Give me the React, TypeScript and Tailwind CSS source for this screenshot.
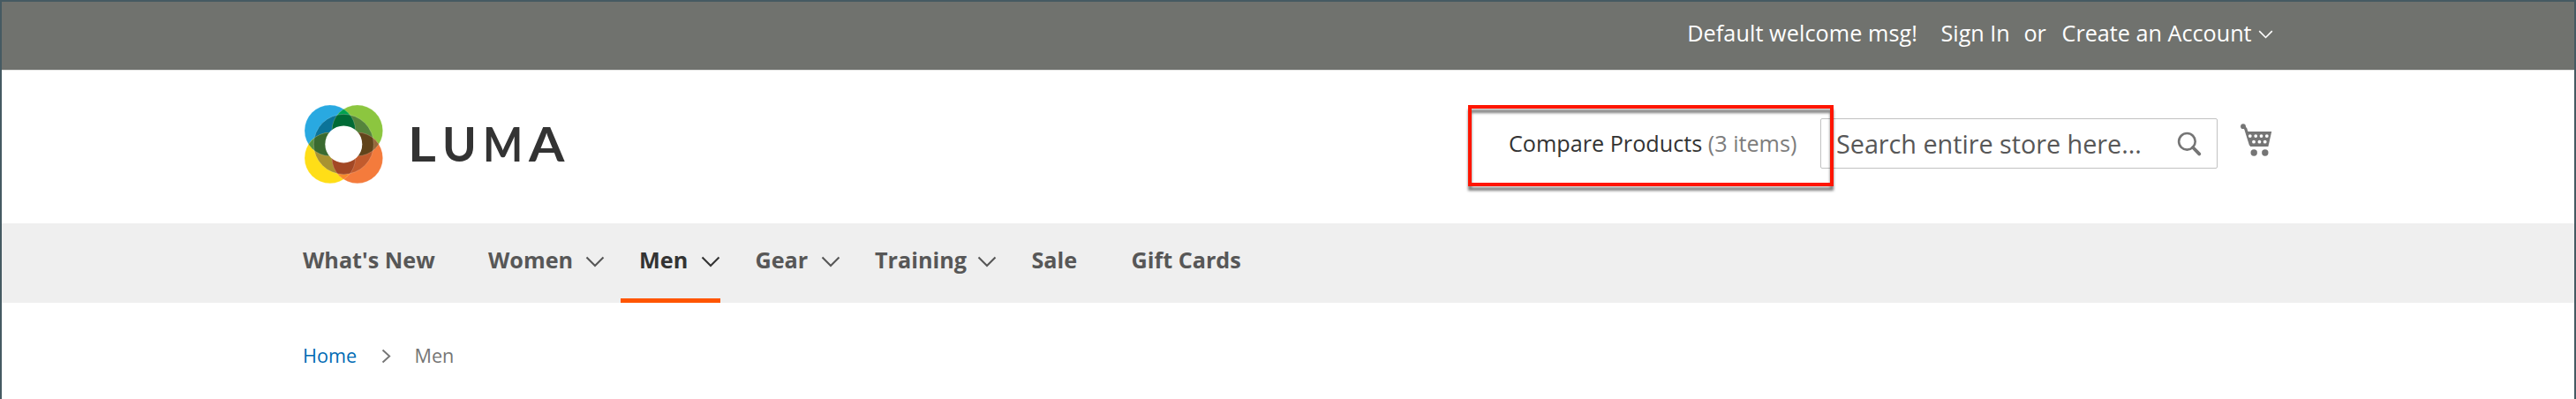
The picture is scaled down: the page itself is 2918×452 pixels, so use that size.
import React from "react";

type NavEntry = { label: string; width: string; menu?: "normal" | "active"; chevron?: string };

const navEntries: NavEntry[] = [
  { label: "What's New", width: "w-[210px]" },
  { label: "Women", width: "w-[150px]", menu: "normal", chevron: "left-[110px]" },
  { label: "Men", width: "w-[113px] mr-[39.5px] pl-[21px]", menu: "active", chevron: "left-[91px]" },
  { label: "Gear", width: "w-[135.5px]", menu: "normal", chevron: "left-[74px]" },
  { label: "Training", width: "w-[177.5px]", menu: "normal", chevron: "left-[116px]" },
  { label: "Sale", width: "w-[113px]" },
  { label: "Gift Cards", width: "w-[140px]" },
];

function Chevron({ className = "" }: { className?: string }) {
  return (
    <svg className={className} viewBox="0 0 22 13" fill="none" stroke="currentColor" strokeWidth="2.1">
      <path d="M1.5 1.5 L11 11 L20.5 1.5" />
    </svg>
  );
}

function LumaLogo() {
  return (
    <svg className="h-[90px] w-[90px] shrink-0" viewBox="344 118 90 90">
      <defs>
        <clipPath id="tl"><circle cx="373.8" cy="147.9" r="28.8" /></clipPath>
        <clipPath id="tr"><circle cx="404.8" cy="147.9" r="28.8" /></clipPath>
        <clipPath id="bl"><circle cx="373.8" cy="178.9" r="28.8" /></clipPath>
        <clipPath id="ring"><circle cx="389.3" cy="163.4" r="34" /></clipPath>
      </defs>
      <circle cx="373.8" cy="147.9" r="28.8" fill="#29a9e1" />
      <circle cx="404.8" cy="147.9" r="28.8" fill="#8cc63f" />
      <circle cx="373.8" cy="178.9" r="28.8" fill="#ffde17" />
      <circle cx="404.8" cy="178.9" r="28.8" fill="#f47b3c" />
      <circle cx="404.8" cy="147.9" r="28.8" fill="#00a14f" clipPath="url(#tl)" />
      <circle cx="373.8" cy="178.9" r="28.8" fill="#579240" clipPath="url(#tl)" />
      <circle cx="404.8" cy="178.9" r="28.8" fill="#96683a" clipPath="url(#tr)" />
      <circle cx="404.8" cy="178.9" r="28.8" fill="#f68a2c" clipPath="url(#bl)" />
      <g clipPath="url(#ring)">
        <circle cx="373.8" cy="147.9" r="28.8" fill="#0b7499" />
        <circle cx="404.8" cy="147.9" r="28.8" fill="#55843c" />
        <circle cx="373.8" cy="178.9" r="28.8" fill="#a99331" />
        <circle cx="404.8" cy="178.9" r="28.8" fill="#c25b2d" />
        <circle cx="404.8" cy="147.9" r="28.8" fill="#006a36" clipPath="url(#tl)" />
        <circle cx="373.8" cy="178.9" r="28.8" fill="#3a6a30" clipPath="url(#tl)" />
        <circle cx="404.8" cy="178.9" r="28.8" fill="#61441b" clipPath="url(#tr)" />
        <circle cx="404.8" cy="178.9" r="28.8" fill="#a34825" clipPath="url(#bl)" />
      </g>
      <g fill="none" stroke="#fff" strokeOpacity="0.3" strokeWidth="0.6">
        <circle cx="373.8" cy="147.9" r="28.8" />
        <circle cx="404.8" cy="147.9" r="28.8" />
        <circle cx="373.8" cy="178.9" r="28.8" />
        <circle cx="404.8" cy="178.9" r="28.8" />
        <circle cx="389.3" cy="163.4" r="34" />
      </g>
      <circle cx="389.3" cy="163.4" r="21" fill="#fff" />
    </svg>
  );
}

function CartIcon() {
  return (
    <svg className="h-[38px] w-[36px] shrink-0" viewBox="0 0 36 38" fill="#757575">
      <circle cx="3" cy="3.2" r="2.9" />
      <path d="M3.2 3.2 L5.8 6 L11.6 24.6" fill="none" stroke="#757575" strokeWidth="3.2" />
      <path d="M6.8 9 H35.2 L31.4 26 H11 Z" />
      <circle cx="15.2" cy="33" r="3.7" />
      <circle cx="27.8" cy="33" r="3.7" />
      <g fill="#fff">
        <circle cx="10.8" cy="14.1" r="1.9" />
        <circle cx="17.2" cy="14.1" r="1.9" />
        <circle cx="23.5" cy="14.1" r="1.9" />
        <circle cx="29.8" cy="14.1" r="1.9" />
        <circle cx="15" cy="20.7" r="1.9" />
        <circle cx="21.4" cy="20.7" r="1.9" />
        <circle cx="27.7" cy="20.7" r="1.9" />
      </g>
    </svg>
  );
}

export default function App() {
  return (
    <div className="flex h-[452px] w-[2918px] flex-col overflow-hidden whitespace-nowrap border-x-2 border-t-2 border-[#455a62] bg-white font-['Open_Sans',sans-serif] text-[25.2px] leading-[34px] text-[#575757]">
      <div className="h-[78px] shrink-0 border-b border-b-[#e3e4e2] bg-[#70726e] pl-[1909.2px] pt-[18px] text-white">
        <div className="flex">
          <span className="w-[287.3px] tracking-[0.09px]">Default welcome msg!</span>
          <span className="w-[93.9px]">Sign In</span>
          <span className="w-[43.2px]">or</span>
          <span className="w-[222.1px]">Create an Account</span>
          <Chevron className="mt-[14px] h-[10px] w-[17px]" />
        </div>
      </div>

      <header className="flex h-[173px] shrink-0 items-start pl-[342px] pt-[38px]">
        <LumaLogo />
        <div className="mt-[15.5px] flex h-[56px] w-[1275px] shrink-0 pl-[27.5px] font-['Lato',sans-serif] text-[53.8px] font-bold leading-[56px] text-[#333]">
          <span className="w-[39.5px] origin-left scale-x-[1.14]">L</span>
          <span className="w-[45.8px] origin-left scale-x-[0.97]">U</span>
          <span className="w-[52.7px] origin-left scale-x-[0.89]">M</span>
          <span className="w-[40px] origin-left scale-x-[1.08]">A</span>
        </div>
        <div className="relative mt-[27px] w-[353px] shrink-0 text-[#333]">
          Compare Products <span className="text-[#7d7d7d]">(3 items)</span>
          <div className="absolute left-[-46px] top-[-26px] z-10 h-[92px] w-[414px] border-4 border-[#ff1500] drop-shadow-[0_5px_1.5px_rgba(0,0,0,0.5)]" />
        </div>
        <div className="mt-[16px] flex h-[57px] w-[450px] shrink-0 items-center rounded-[2px] border border-[#c2c2c2] pl-[17px] text-[28.8px]">
          <span className="w-[386px] tracking-[-0.03px]">Search entire store here...</span>
          <svg className="h-[28px] w-[28px]" viewBox="0 0 28 28" fill="none" stroke="#757575">
            <circle cx="11.4" cy="11.3" r="9.3" strokeWidth="2.6" />
            <path d="M18 18 L25.2 25.4" strokeWidth="3.8" strokeLinecap="round" />
          </svg>
        </div>
        <div className="ml-[25.5px] mt-[22px]">
          <CartIcon />
        </div>
      </header>

      <nav className="flex h-[90px] shrink-0 bg-[#efefef] pl-[341px] font-bold">
        {navEntries.map((entry) => (
          <div
            key={entry.label}
            className={`relative h-[90px] shrink-0 pt-[23.5px] ${entry.width} ${
              entry.menu === "active" ? "border-b-[5px] border-[#ff5501] text-[#333]" : ""
            }`}
          >
            {entry.label}
            {entry.menu && <Chevron className={`absolute top-[37px] h-[13px] w-[22px] ${entry.chevron}`} />}
          </div>
        ))}
      </nav>

      <div className="flex pl-[341px] pt-[42.5px] text-[21.6px]">
        <span className="w-[88.5px] text-[#006bb4]">Home</span>
        <svg className="mt-[9px] h-[17px] w-[12px]" viewBox="0 0 12 17" fill="none" stroke="#757575" strokeWidth="1.9">
          <path d="M1.5 1.5 L9.2 8.5 L1.5 15.5" />
        </svg>
        <span className="ml-[26px] text-[#757575]">Men</span>
      </div>
    </div>
  );
}
